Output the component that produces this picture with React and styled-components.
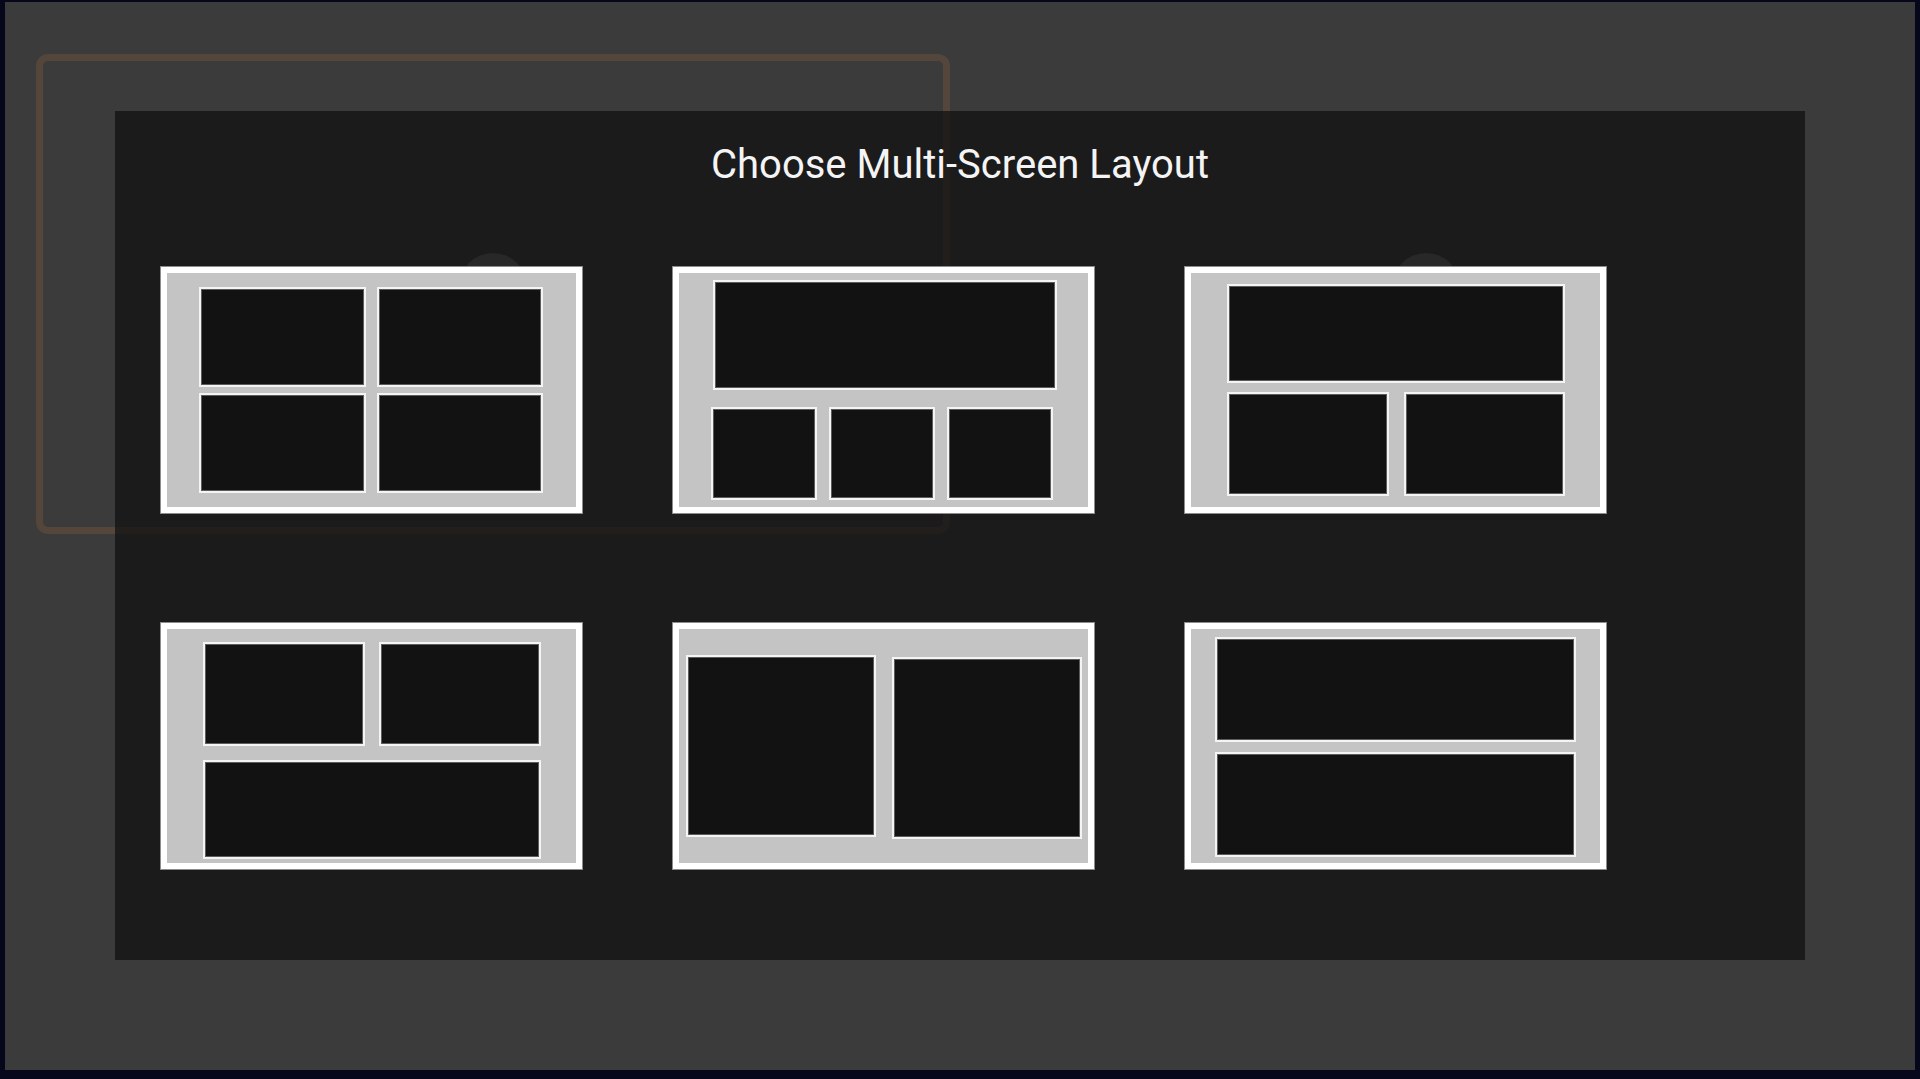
import styled, { createGlobalStyle } from "styled-components";

const layouts = [
  {
    pad: "14px 33px 14px 32px",
    cols: "1fr 1fr",
    rows: "100px 100px",
    gap: "6px 11px",
    tiles: [{}, {}, {}, {}],
    circle: 332,
  },
  {
    pad: "7px 35px 7px 32px",
    cols: "1fr 1fr 1fr",
    rows: "110px 93px",
    gap: "17px 12px",
    tiles: [{ span: "1 / -1", margin: "0 -4px 0 2px" }, {}, {}, {}],
  },
  {
    pad: "11px 35px 11px 36px",
    cols: "1fr 1fr",
    rows: "99px 104px",
    gap: "9px 15px",
    tiles: [{ span: "1 / -1" }, {}, {}],
    circle: 241,
  },
  {
    pad: "13px 35px 4px 36px",
    cols: "1fr 1fr",
    rows: "104px 99px",
    gap: "14px 14px",
    tiles: [{}, {}, { span: "1 / -1" }],
  },
  {
    pad: "26px 6px 26px 7px",
    cols: "1fr 1fr",
    rows: "182px",
    gap: "0 16px",
    tiles: [{}, { margin: "2px 0 -2px 0" }],
  },
  {
    pad: "8px 24px 6px 24px",
    cols: "1fr",
    rows: "105px 105px",
    gap: "10px 0",
    tiles: [{}, {}],
  },
];

const App = () => {
  return (
    <>
      <GlobalStyle />
      <Screen>
        <Frame>
          <FocusRing />
          <Panel>
            <Title>Choose Multi-Screen Layout</Title>
            <LayoutGrid>
              {layouts.map((l, i) => (
                <Cell key={i}>
                  {l.circle && <Glow $left={l.circle} />}
                  <Card $pad={l.pad} $cols={l.cols} $rows={l.rows} $gap={l.gap}>
                    {l.tiles.map((t, j) => (
                      <Tile key={j} $span={t.span} $margin={t.margin} />
                    ))}
                  </Card>
                </Cell>
              ))}
            </LayoutGrid>
          </Panel>
        </Frame>
      </Screen>
    </>
  );
};

export default App;

const GlobalStyle = createGlobalStyle`
  html, body {
    margin: 0;
    padding: 0;
    background: #06071a;
  }
  * {
    box-sizing: border-box;
  }
`;

const Screen = styled.div`
  width: 1920px;
  height: 1079px;
  padding: 2px 5px 9px 5px;
  background: #06071a;
`;

const Frame = styled.div`
  position: relative;
  height: 100%;
  background: #3b3b3c;
  padding: 109px 0 0 110px;
  overflow: hidden;
`;

// highlight ring left over from the screen behind the dialog
const FocusRing = styled.div`
  position: absolute;
  left: 31px;
  top: 52px;
  width: 914px;
  height: 480px;
  border: 7px solid #54463a;
  border-radius: 12px;
`;

const Panel = styled.div`
  position: relative;
  width: 1690px;
  height: 849px;
  background: rgba(20, 20, 20, 0.8);
  padding-top: 30px;
`;

const Title = styled.h1`
  margin: 0;
  font-family: Roboto, "Liberation Sans", sans-serif;
  font-weight: 400;
  font-size: 40px;
  line-height: 47px;
  color: #f4f4f4;
  text-align: center;
`;

const LayoutGrid = styled.div`
  display: grid;
  grid-template-columns: repeat(3, 421px);
  column-gap: 91px;
  row-gap: 110px;
  margin-top: 79px;
  padding-left: 46px;
`;

const Cell = styled.div`
  position: relative;
`;

const Glow = styled.div`
  position: absolute;
  top: -14px;
  left: ${(p) => p.$left - 34}px;
  width: 68px;
  height: 68px;
  border-radius: 50%;
  background: #282828;
`;

const Card = styled.div`
  position: relative;
  width: 421px;
  height: 246px;
  border: 6px solid #ffffff;
  box-shadow: 0 0 0 1px #8c8c8c;
  background: #c4c4c4;
  padding: ${(p) => p.$pad};
  display: grid;
  grid-template-columns: ${(p) => p.$cols};
  grid-template-rows: ${(p) => p.$rows};
  gap: ${(p) => p.$gap};
`;

const Tile = styled.div`
  grid-column: ${(p) => p.$span || "auto"};
  margin: ${(p) => p.$margin || "0"};
  background: #121212;
  border: 2px solid #f4f4f4;
  box-shadow: inset 0 0 0 1px #5c5c5c;
`;
